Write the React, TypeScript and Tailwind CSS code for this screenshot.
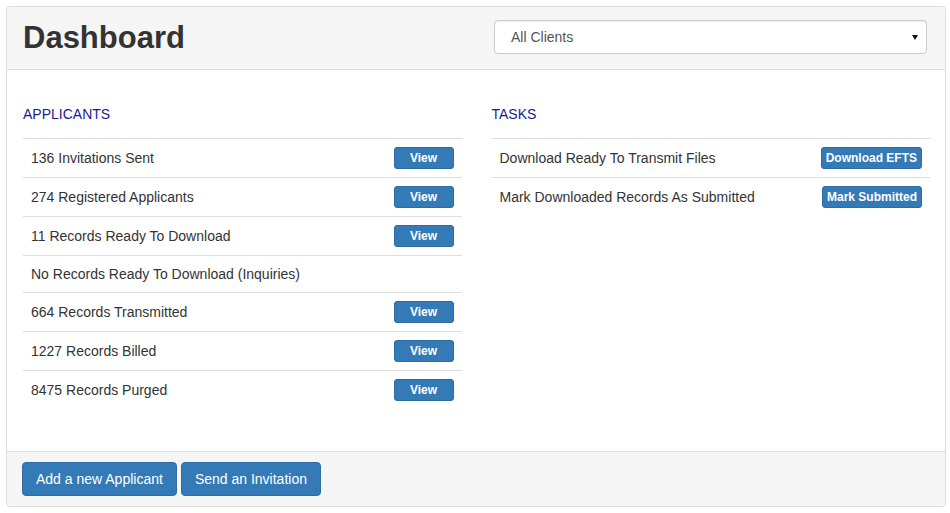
import React from 'react';

const applicants: { label: string; action?: string }[] = [
  { label: '136 Invitations Sent', action: 'View' },
  { label: '274 Registered Applicants', action: 'View' },
  { label: '11 Records Ready To Download', action: 'View' },
  { label: 'No Records Ready To Download (Inquiries)' },
  { label: '664 Records Transmitted', action: 'View' },
  { label: '1227 Records Billed', action: 'View' },
  { label: '8475 Records Purged', action: 'View' },
];

const tasks = [
  { label: 'Download Ready To Transmit Files', action: 'Download EFTS' },
  { label: 'Mark Downloaded Records As Submitted', action: 'Mark Submitted' },
];

function SmallButton({ children, wide }: { children: string; wide?: boolean }) {
  return (
    <button
      type="button"
      className={`h-[22px] rounded-[3px] border border-[#2e6da4] bg-[#337ab7] px-1 text-[12px] font-bold leading-[18px] text-white ${
        wide ? 'w-[60px]' : ''
      }`}
    >
      {children}
    </button>
  );
}

function Section({
  title,
  rows,
  wide,
}: {
  title: string;
  rows: { label: string; action?: string }[];
  wide?: boolean;
}) {
  return (
    <div>
      <h4 className="mb-[14px] text-[14px] leading-5 text-[#1c1a8e]">{title}</h4>
      <div>
        {rows.map((row) => (
          <div
            key={row.label}
            className="flex items-center justify-between border-t border-[#dddddd] p-2"
          >
            <span className="leading-5">{row.label}</span>
            {row.action && <SmallButton wide={wide}>{row.action}</SmallButton>}
          </div>
        ))}
      </div>
    </div>
  );
}

export default function App() {
  return (
    <div
      className="min-h-[513px] bg-white p-[6px] text-[14px] text-[#333333]"
      style={{ fontFamily: '"Liberation Sans", Arial, sans-serif' }}
    >
      <div className="flex h-[501px] w-[940px] flex-col rounded border border-[#dddddd]">
        <div className="flex h-[63px] items-center justify-between rounded-t border-b border-[#dddddd] bg-[#f5f5f5] pl-4 pr-[18px]">
          <h1 className="mt-[-2px] text-[31px] font-bold leading-none text-[#333333]">Dashboard</h1>
          <div className="mt-[-2px] flex h-[34px] w-[433px] items-center justify-between rounded border border-[#cccccc] bg-white pl-4 pr-2 text-[#555555] shadow-[inset_0_1px_1px_rgba(0,0,0,0.075)]">
            <span>All Clients</span>
            <svg width="6" height="5" viewBox="0 0 6 5" className="mt-[1px]">
              <path d="M0 0H6L3 5Z" fill="#111" />
            </svg>
          </div>
        </div>

        <div className="grid flex-1 grid-cols-2 gap-[30px] pl-4 pr-[15px] pt-[34px]">
          <Section title="APPLICANTS" rows={applicants} wide />
          <Section title="TASKS" rows={tasks} />
        </div>

        <div className="flex h-[55px] gap-1 rounded-b border-t border-[#dddddd] bg-[#f5f5f5] px-[15px] pt-[10px]">
          <button
            type="button"
            className="h-[34px] rounded border border-[#2e6da4] bg-[#337ab7] px-[13px] leading-5 text-white"
          >
            Add a new Applicant
          </button>
          <button
            type="button"
            className="h-[34px] rounded border border-[#2e6da4] bg-[#337ab7] px-[13px] leading-5 text-white"
          >
            Send an Invitation
          </button>
        </div>
      </div>
    </div>
  );
}
